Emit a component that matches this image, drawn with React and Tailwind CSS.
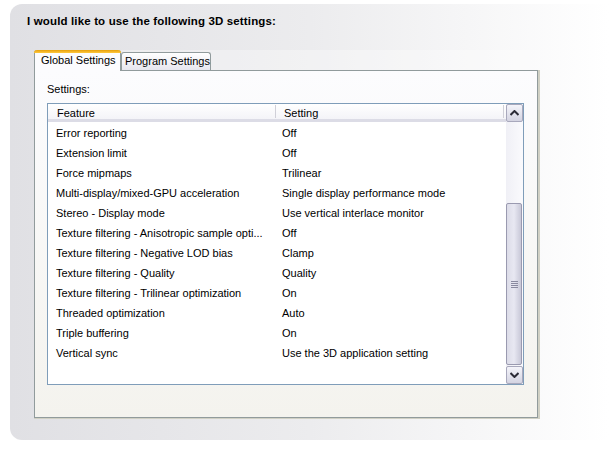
const rows = [
  ['Error reporting', 'Off'],
  ['Extension limit', 'Off'],
  ['Force mipmaps', 'Trilinear'],
  ['Multi-display/mixed-GPU acceleration', 'Single display performance mode'],
  ['Stereo - Display mode', 'Use vertical interlace monitor'],
  ['Texture filtering - Anisotropic sample opti...', 'Off'],
  ['Texture filtering - Negative LOD bias', 'Clamp'],
  ['Texture filtering - Quality', 'Quality'],
  ['Texture filtering - Trilinear optimization', 'On'],
  ['Threaded optimization', 'Auto'],
  ['Triple buffering', 'On'],
  ['Vertical sync', 'Use the 3D application setting'],
];

const Chevron = ({ down }) => (
  <svg width="9" height="6" viewBox="0 0 9 6" className={down ? 'rotate-180' : ''}>
    <path d="M0.5 5 L4.5 1 L8.5 5" fill="none" stroke="#2b2b36" strokeWidth="2" />
  </svg>
);

const ScrollButton = ({ down }) => (
  <div className="h-[18px] w-[17px] flex items-center justify-center rounded-[2px] border border-[#a8a8bc] bg-gradient-to-b from-[#f4f4fa] to-[#d4d4e2]">
    <Chevron down={down} />
  </div>
);

export default function App() {
  return (
    <div className="w-[609px] h-[450px] bg-white pt-[4px] pl-[10px] font-['Liberation_Sans',Arial,sans-serif] text-[11px] text-black">
      <div className="w-[599px] h-[436px] rounded-l-[12px] bg-gradient-to-r from-[#e0e0e4] via-[#ececee] to-white pl-[24px] pt-[10px]">
        <h1 className="ml-[-7px] h-[14px] leading-[14px] font-bold text-[11.5px] tracking-[0.15px]">
          I would like to use the following 3D settings:
        </h1>

        {/* tab strip */}
        <div className="mt-[22px] w-[506px] h-[20px] bg-white/30 flex items-end relative z-10">
          <div className="w-[87px] h-[21px] mb-[-1px] rounded-t-[3px] border-x border-[#919b9c] bg-[#fcfcfe] relative">
            <div className="absolute -left-px -right-px top-0 h-[3px] rounded-t-[3px] bg-gradient-to-b from-[#e6a000] to-[#ffc83c]" />
            <div className="pt-[3px] pl-[6px] leading-[14px]">Global Settings</div>
          </div>
          <div className="w-[90px] h-[18px] rounded-t-[3px] border border-b-0 border-[#919b9c] bg-gradient-to-b from-white to-[#e6e6ee] pl-[3px] leading-[16px]">
            Program Settings
          </div>
        </div>

        {/* tab panel */}
        <div className="w-[506px] h-[349px] border-r-2 border-b border-[#d0d0c4]">
          <div className="w-[504px] h-[348px] border border-[#919b9c] bg-gradient-to-b from-[#fcfcfe] to-[#f4f3ee] pl-[12px] pt-[11px]">
            <div className="leading-[14px]">Settings:</div>
            <div className="mt-[7px] w-[477px] h-[282px] border border-[#7f9db9] bg-white flex">
              <div className="w-[458px] overflow-hidden">
                <div className="h-[18px] flex border-b-[3px] border-[#dcdce6] bg-gradient-to-b from-white to-[#f4f4f8]">
                  <div className="w-[228px] pl-[9px] pt-[2px] leading-[13px] border-r border-[#d0d0d8] my-[1px]">Feature</div>
                  <div className="w-[228px] pl-[8px] pt-[2px] leading-[13px] border-r border-[#d0d0d8] my-[1px]">Setting</div>
                </div>
                <div className="pt-[1px]">
                  {rows.map(([f, s]) => (
                    <div key={f} className="h-[20px] flex items-center leading-[20px]">
                      <div className="w-[228px] pl-[8px] whitespace-nowrap">{f}</div>
                      <div className="flex-1 pl-[6px] whitespace-nowrap">{s}</div>
                    </div>
                  ))}
                </div>
              </div>
              <div className="w-[17px] flex flex-col bg-gradient-to-r from-[#f0f0f6] to-[#fafafd]">
                <ScrollButton />
                <div className="flex-1 pt-[81px]">
                  <div className="h-[162px] w-[16px] rounded-[2px] border border-[#9a9ab0] bg-gradient-to-r from-[#dcdce8] via-[#e8e8f2] to-[#c8c8d8] flex flex-col items-center justify-center gap-[1px]">
                    <div className="w-[7px] h-px bg-[#8a8aa0]" />
                    <div className="w-[7px] h-px bg-[#8a8aa0]" />
                    <div className="w-[7px] h-px bg-[#8a8aa0]" />
                    <div className="w-[7px] h-px bg-[#8a8aa0]" />
                  </div>
                </div>
                <ScrollButton down />
              </div>
            </div>
          </div>
        </div>
      </div>
    </div>
  );
}
